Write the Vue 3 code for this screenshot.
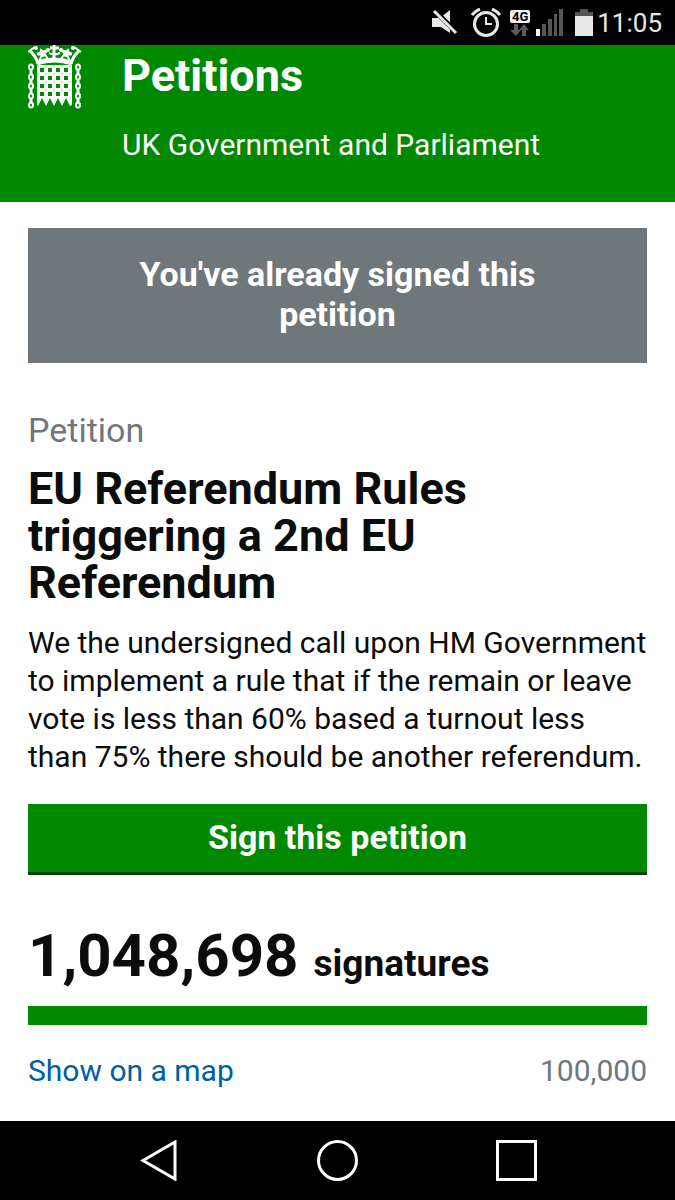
<script setup>
const chainX = [3, 50]
const linkY = [22, 32, 41, 51, 60]
const cols = [14, 22, 30, 38]
const rows = [25, 33, 41, 49]
const rivetX = [10, 18, 26, 34, 42]
const rivetY = [21, 29, 37, 45]
const fleurs = [
  'translate(14 8) rotate(-18)',
  'translate(39 8) rotate(18)',
]
const signatures = (1048698).toLocaleString('en-GB')
const threshold = (100000).toLocaleString('en-GB')
</script>

<template>
  <div class="screen">
    <div class="status">
      <svg class="mute" width="27" height="25" viewBox="0 0 27 25" aria-label="Muted" role="img">
        <path d="M1 8h8L19 0v23l-9-6H1z" fill="#e8e8e8" />
        <path d="M2 -1l24 24" stroke="#000" stroke-width="5" />
        <path d="M3 1l22 22" stroke="#e8e8e8" stroke-width="3" />
      </svg>
      <svg class="alarm" width="31" height="30" viewBox="0 0 31 30" aria-label="Alarm set" role="img" fill="none" stroke="#e8e8e8">
        <circle cx="15" cy="16" r="11.500" stroke-width="3" />
        <path d="M1 7Q4 3 9 1M21 1q5 2 8 6" stroke-width="3" />
        <path d="M15 9v7h6" stroke-width="2" />
      </svg>
      <div class="data">
        <span class="badge">4G</span>
        <svg width="20" height="12" viewBox="0 0 20 12" aria-hidden="true" fill="#5c5c5c">
          <path d="M4 0h4v6h3l-5 6-6-6h4zM12 12h4V6h3l-5-6-5 6h3z" />
        </svg>
      </div>
      <svg class="signal" width="27" height="27" viewBox="0 0 27 27" aria-label="Signal strength" role="img">
        <path d="M0 20h4v7H0z" fill="#fff" />
        <path d="M6 15h4v12H6zM12 10h4v17h-4zM18 5h3v22h-3zM23 0h4v27h-4z" fill="#565656" />
      </svg>
      <svg class="battery" width="18" height="27" viewBox="0 0 18 27" aria-label="Battery" role="img">
        <path d="M0 3h5V0h8v3h5v5H0z" fill="#565656" />
        <path d="M0 7h18v20H0z" fill="#e8e8e8" />
      </svg>
      <time>11:05</time>
    </div>

    <header class="banner">
      <svg class="crest" width="54" height="64" viewBox="0 0 54 64" aria-label="UK Parliament" role="img">
        <g fill="none" stroke="#fff">
          <path d="M9 18Q26 12 44 18" stroke-width="5" />
          <path d="M10 19Q8 11 2 6M43 19Q45 11 51 6" stroke-width="3" />
          <path d="M0 7l7-5M53 7l-7-5" stroke-width="2" />
          <path d="M11 16l3-6M42 16l-3-6M20 14l-4-6M33 14l4-6" stroke-width="2" />
          <path d="M26 14V0M22 3h9" stroke-width="3" />
          <path d="M21 8q5 3 11 0" stroke-width="2" />
        </g>
        <g v-for="f in fleurs" :key="f" :transform="f" fill="#fff">
          <path d="M0-5L2-2 5-2 5 1 2 2 2 4H-2L-2 2-5 1-5-2-2-2z" />
        </g>
        <g fill="#fff">
          <circle cx="8" cy="3" r="2" />
          <circle cx="20" cy="5" r="2" />
          <circle cx="33" cy="5" r="2" />
          <circle cx="45" cy="3" r="2" />
          <path d="M9 20H44V60L42 61 38 53 34 61 30 53 26 61 22 53 18 61 14 53 10 61 9 60z" />
        </g>
        <g fill="#080">
          <template v-for="y in rows" :key="y">
            <rect v-for="x in cols" :key="x" :x="x - 2" :y="y - 2" width="4" height="4" />
          </template>
          <template v-for="y in rivetY" :key="y">
            <circle v-for="x in rivetX" :key="x" :cx="x" :cy="y" r=".6" />
          </template>
        </g>
        <g v-for="x in chainX" :key="x" fill="none" stroke="#fff">
          <path :d="`M${x} 24V58`" stroke-width="3" />
          <ellipse v-for="y in linkY" :key="y" :cx="x" :cy="y" rx="2" ry="2.5" stroke-width="2" fill="#080" />
        </g>
      </svg>
      <div class="brand">
        <p class="name">Petitions</p>
        <p class="owner">UK Government and Parliament</p>
      </div>
    </header>

    <main>
      <p class="notice">You've already signed this petition</p>
      <p class="kicker">Petition</p>
      <h1>EU Referendum Rules triggering a 2nd EU Referendum</h1>
      <p class="action">We the undersigned call upon HM Government to implement a rule that if the remain or leave vote is less than 60% based a turnout less than 75% there should be another referendum.</p>
      <button type="button" class="sign">Sign this petition</button>
      <p class="count"><strong>{{ signatures }}</strong> <span>signatures</span></p>
      <div class="bar" role="progressbar" aria-label="Signatures" aria-valuenow="100" aria-valuemin="0" aria-valuemax="100"></div>
      <div class="foot">
        <a href="#map">Show on a map</a>
        <span>{{ threshold }}</span>
      </div>
    </main>

    <nav class="keys">
      <button type="button" aria-label="Back">
        <svg width="41" height="41" viewBox="0 0 41 41"><path d="M5 20.500L37 2v37z" /></svg>
      </button>
      <button type="button" aria-label="Home">
        <svg width="41" height="41" viewBox="0 0 41 41"><circle cx="20.500" cy="20.500" r="19" /></svg>
      </button>
      <button type="button" aria-label="Recent apps">
        <svg width="41" height="41" viewBox="0 0 41 41"><path d="M1.500 1.500h38v38h-38z" /></svg>
      </button>
    </nav>
  </div>
</template>

<style>
body {
  margin: 0;
  background: #fff;
}
</style>

<style scoped>
.screen {
  display: flex;
  flex-direction: column;
  min-height: 100vh;
  background: #fff;
  color: #0b0c0c;
  font-family: Roboto, "Liberation Sans", sans-serif;
  font-size: 30px;
  line-height: 38px;
}
p,
h1 {
  margin: 0;
}
svg {
  display: block;
  flex: none;
}
button {
  margin: 0;
  border: 0;
  font: inherit;
  cursor: pointer;
}

.status {
  display: flex;
  align-items: center;
  justify-content: flex-end;
  height: 45px;
  padding-right: 13px;
  background: #000;
  color: #e8e8e8;
}
.mute {
  margin-right: 13px;
}
.alarm {
  margin-right: 8px;
}
.data {
  display: flex;
  flex-direction: column;
  align-items: center;
  gap: 1px;
  margin-right: 6px;
}
.badge {
  width: 20px;
  border-radius: 2px;
  background: #f2f2f2;
  color: #000;
  font-size: 13px;
  font-weight: 700;
  line-height: 13px;
  text-align: center;
}
.signal {
  margin-right: 12px;
}
.battery {
  margin-right: 4px;
}
time {
  font-size: 26px;
  line-height: 30px;
}

.banner {
  display: flex;
  align-items: flex-start;
  gap: 40px;
  padding: 0 28px 38px;
  background: #080;
  color: #fff;
}
.brand {
  display: flex;
  flex-direction: column;
  gap: 26px;
  padding-top: 7px;
}
.name {
  font-size: 45px;
  font-weight: 700;
  line-height: 48px;
}

main {
  flex: 1;
  padding: 26px 28px;
}
.notice {
  padding: 26px 56px 29px;
  background: #6f777b;
  color: #fff;
  font-size: 34px;
  font-weight: 700;
  line-height: 40px;
  text-align: center;
}
.kicker {
  margin-top: 47px;
  color: #6f777b;
  font-size: 34px;
  line-height: 40px;
}
h1 {
  margin-top: 15px;
  font-size: 45px;
  font-weight: 700;
  line-height: 47px;
}
.action {
  margin-top: 18px;
}
.sign {
  display: block;
  width: 100%;
  margin-top: 28px;
  padding: 13px 28px 15px;
  border-bottom: 3px solid #003d00;
  background: #080;
  color: #fff;
  font-size: 34px;
  font-weight: 700;
  line-height: 40px;
}
.count {
  display: flex;
  align-items: baseline;
  gap: 15px;
  margin-top: 51px;
  font-size: 37px;
  font-weight: 700;
  line-height: 40px;
}
.count strong {
  font-size: 60px;
  font-weight: 700;
  line-height: 60px;
}
.bar {
  height: 19px;
  margin-top: 20px;
  background: #080;
}
.foot {
  display: flex;
  justify-content: space-between;
  margin-top: 27px;
  color: #6f777b;
}
a {
  color: #005ea5;
  text-decoration: none;
}

.keys {
  display: flex;
  height: 79px;
  padding: 0 69px;
  background: #000;
}
.keys button {
  display: flex;
  flex: 1;
  align-items: center;
  justify-content: center;
  padding: 0;
  background: none;
}
.keys svg {
  fill: none;
  stroke: #fff;
  stroke-width: 3;
}
</style>
